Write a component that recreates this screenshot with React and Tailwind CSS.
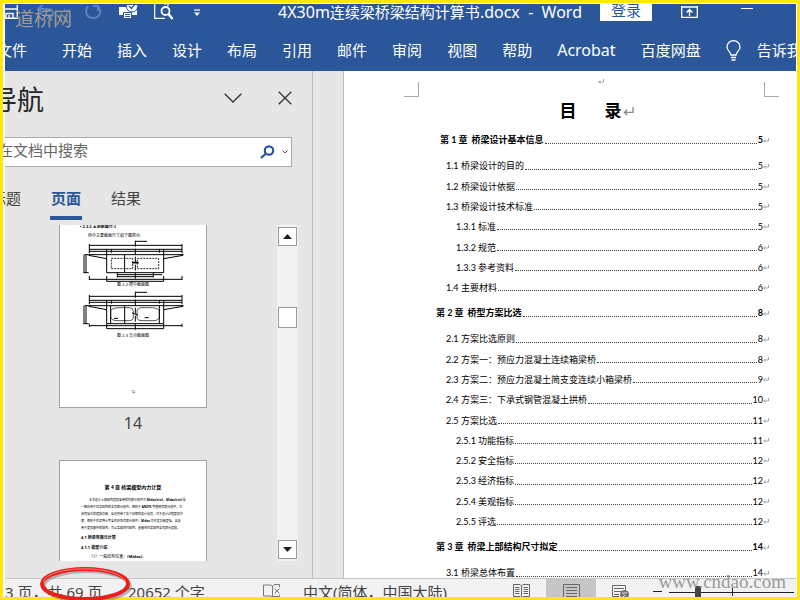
import React from "react";

const tabs = ["开始", "插入", "设计", "布局", "引用", "邮件", "审阅", "视图", "帮助", "Acrobat", "百度网盘"];

const chapters = [
  {
    number: "1",
    title: "桥梁设计基本信息",
    page: 5,
    first: true,
    items: [
      ["1.1", "桥梁设计的目的", 5],
      ["1.2", "桥梁设计依据", 5],
      ["1.3", "桥梁设计技术标准", 5],
      ["1.3.1", "标准", 5],
      ["1.3.2", "规范", 6],
      ["1.3.3", "参考资料", 6],
      ["1.4", "主要材料", 6],
    ],
  },
  {
    number: "2",
    title: "桥型方案比选",
    page: 8,
    items: [
      ["2.1", "方案比选原则", 8],
      ["2.2", "方案一：预应力混凝土连续箱梁桥", 8],
      ["2.3", "方案二：预应力混凝土简支变连续小箱梁桥", 9],
      ["2.4", "方案三：下承式钢管混凝土拱桥", 10],
      ["2.5", "方案比选", 11],
      ["2.5.1", "功能指标", 11],
      ["2.5.2", "安全指标", 12],
      ["2.5.3", "经济指标", 12],
      ["2.5.4", "美观指标", 12],
      ["2.5.5", "评选", 12],
    ],
  },
  {
    number: "3",
    title: "桥梁上部结构尺寸拟定",
    page: 14,
    items: [["3.1", "桥梁总体布置", 14]],
  },
];

function Return({ className }) {
  return (
    <svg viewBox="0 0 12 10" className={className} fill="none" stroke="#8a8a8a" strokeWidth="1.5">
      <path d="M11 0V6H1.5M4.5 3L1.5 6L4.5 9" />
    </svg>
  );
}

function QuickTools() {
  return (
    <div className="flex h-full items-start">
      <button aria-label="保存" className="h-4 w-8">
        <svg width="14" height="14" viewBox="0 0 14 14" fill="none" stroke="#fff" strokeWidth="1.4">
          <path d="M12.3 0V13.3H0M0 4H12" />
          <path d="M1 13V8.5H8V13M4 10v3" />
        </svg>
      </button>
      <button aria-label="撤消" className="h-4 w-12">
        <svg width="34" height="14" viewBox="0 0 34 14" fill="none" stroke="#5b80ba" strokeWidth="2">
          <path d="M6 0L1 4L6 8M1 4H11C18 4 18 13 10 13" />
          <path d="M27 4L30 7L33 4" strokeWidth="1.3" />
        </svg>
      </button>
      <button aria-label="恢复" className="h-4 w-[33px]">
        <svg width="17" height="14" viewBox="0 0 17 14" fill="none" stroke="#5b80ba" strokeWidth="2">
          <path d="M3 1C-1 7 2 13 8 13S18 7 13 1M8 1h5v5" />
        </svg>
      </button>
      <button aria-label="打印预览和打印" className="h-4 w-9">
        <svg width="21" height="14" viewBox="0 0 21 14">
          <path d="M1 2H9V5H13L19 4V10H1Z" fill="#fff" />
          <circle cx="14" cy="1.5" r="5.5" fill="#fff" stroke="#2b579a" />
          <path d="M11 1L13.5 3.5L17 -1" stroke="#2b579a" strokeWidth="1.4" fill="none" />
          <path d="M5.5 7.5H13.5V13.5H5.5Z" fill="#fff" stroke="#2b579a" />
          <path d="M7 9.5h5M7 11.5h5" stroke="#2b579a" />
        </svg>
      </button>
      <button aria-label="查找" className="h-4 w-10">
        <svg width="20" height="16" viewBox="0 0 20 16" fill="none" stroke="#fff" strokeWidth="1.2">
          <path d="M.7 0V14.4H11M11 0V1M14 0V2" />
          <circle cx="11.5" cy="7" r="4" strokeWidth="1.8" />
          <path d="M14.5 10L18.5 15" strokeWidth="2.2" />
        </svg>
      </button>
      <button aria-label="自定义快速访问工具栏" className="h-4 w-3">
        <svg width="6" height="12" viewBox="0 0 6 12" className="mt-1">
          <path d="M0 2h6" stroke="#fff" strokeWidth="1.2" />
          <path d="M0 4.500h6L3 8Z" fill="#fff" />
        </svg>
      </button>
    </div>
  );
}

function Ribbon() {
  return (
    <header className="shrink-0 bg-[#2b579a] text-[15px] text-white">
      <div className="flex h-[17px] justify-between overflow-hidden pr-[43px]">
        <QuickTools />
        <div className="flex">
          <h1 className="mr-[18px] text-base leading-4 whitespace-pre">
            4X30m<span className="text-[15px]">连续梁桥梁结构计算书</span>.docx  -  Word
          </h1>
          <button className="flex w-[52px] justify-center bg-white leading-3 text-[#2b579a]">登录</button>
          <button aria-label="功能区显示选项" className="ml-[29px] h-4">
            <svg width="17" height="12" viewBox="0 0 17 12" fill="none" stroke="#fff" strokeWidth="1.3">
              <path d="M.7 0V11.3H16.3V0M0 1H17M8.5 10V3.5M5.5 6.5L8.5 3.5L11.5 6.5" />
            </svg>
          </button>
          <button aria-label="最小化" className="ml-[43px] flex h-4 w-3 items-start pt-1">
            <span className="h-px w-3 bg-white" />
          </button>
        </div>
      </div>
      <nav className="flex h-[50px] items-center gap-[25px] overflow-hidden pt-2 whitespace-nowrap">
        <button className="mr-[10px] -ml-2 shrink-0">文件</button>
        {tabs.map((t) => (
          <button key={t} className={`shrink-0 ${t === "Acrobat" ? "text-base" : ""}`}>{t}</button>
        ))}
        <button className="flex shrink-0 items-center gap-4">
          <svg width="15" height="21" viewBox="0 0 15 21" fill="none" stroke="#fff" strokeWidth="1.3">
            <path d="M5 15C5 12 1 11 1 7A6.5 6.3 0 0 1 14 7C14 11 10 12 10 15ZM5 17.5h5M5.5 20h4" />
          </svg>
          告诉我
        </button>
      </nav>
    </header>
  );
}

function SectionDrawing({ curved }) {
  return (
    <svg width="106" height="42" viewBox="0 0 318 126" fill="none" stroke="#000" strokeWidth="3" className="ml-[22px] shrink-0">
      <path d="M160 2V122" strokeDasharray="18 6" />
      <path d="M160 4H195M22 16H300M22 28H300M22 34H300" />
      <path d="M22 12V40M300 12V40M74 28V44M245 28V44M88 28V38M232 28V38" />
      <path d="M8 44H305M20 46L74 56M245 56L303 46M74 44V98M245 44V98" />
      <path d="M12 44V98M6 44V98M4 98H20M128 44V98" />
      {curved ? (
        <>
          <path d="M86 58Q94 49 120 50H142Q154 50 154 62V78Q154 89 140 89H104Q86 88 86 76ZM232 58Q224 49 200 50H180Q165 50 165 62V78Q165 89 180 89H216Q232 88 232 76Z" strokeWidth="2" />
          <path d="M86 44V98M232 44V98M74 98H245M22 104H300M74 113H245M22 98V108M300 98V108M74 98V113M245 98V113" />
          <path d="M96 82H108M188 80H200M150 66L168 72" />
        </>
      ) : (
        <>
          <path d="M88 55H152V86H88ZM166 55H230V86H166Z" strokeWidth="2.5" strokeDasharray="6 3" />
          <path d="M74 98H245M106 104H240M106 110H214M106 96V112M214 96V112M22 118H300M74 124H245M22 108V120M300 108V120M74 108V124M245 108V124" />
          <path d="M150 68H170" strokeWidth="5" />
        </>
      )}
    </svg>
  );
}

function Navigation() {
  return (
    <aside className="flex w-[308px] shrink-0 flex-col border-r border-[#bcbcbc] bg-[#e6e6e6] text-[15px] text-[#444]">
      <div className="flex h-[66px] items-center justify-between pr-5 pb-3">
        <h2 className="-ml-[15px] pt-1 text-[27px] text-[#262626]">导航</h2>
        <div className="flex items-center gap-9">
          <button aria-label="任务窗格选项">
            <svg width="18" height="10" viewBox="0 0 18 10" fill="none" stroke="#333" strokeWidth="1.3">
              <path d="M.7 .7L9 9L17.300 .7" />
            </svg>
          </button>
          <button aria-label="关闭">
            <svg width="14" height="14" viewBox="0 0 14 14" fill="none" stroke="#333" strokeWidth="1.3">
              <path d="M.7 .7L13.300 13.300M13.300 .7L.7 13.300" />
            </svg>
          </button>
        </div>
      </div>
      <div className="mr-5 flex h-[30px] shrink-0 items-center border border-l-0 border-[#ababab] bg-white pr-[3px]">
        <input
          aria-label="在文档中搜索"
          placeholder="在文档中搜索"
          className="-ml-[7px] min-w-0 flex-1 pb-[3px] outline-none placeholder:text-[#666]"
        />
        <button aria-label="搜索">
          <svg width="15" height="14" viewBox="0 0 15 14" fill="none" stroke="#2b579a" strokeWidth="2.2">
            <circle cx="9" cy="5.500" r="4.200" />
            <path d="M6 8.500L1 13" />
          </svg>
        </button>
        <button aria-label="搜索选项" className="ml-[7px]">
          <svg width="6" height="4" viewBox="0 0 6 4" fill="none" stroke="#555">
            <path d="M.5 .5L3 3L5.500 .5" />
          </svg>
        </button>
      </div>
      <div className="flex h-[53px] shrink-0 items-end gap-7 leading-[22px]">
        <button className="-ml-[15px] border-b-4 border-transparent px-px pb-[7px]">标题</button>
        <button className="border-b-4 border-[#2b579a] px-px pb-[7px] font-bold text-[#2b579a]">页面</button>
        <button className="border-b-4 border-transparent px-px pb-[7px]">结果</button>
      </div>
      <div className="mt-[5px] mb-[17px] flex min-h-0 flex-1 justify-between pr-[14px] pl-[54px]">
        <div className="flex w-[148px] flex-col overflow-hidden text-[4px] leading-[6px] text-black">
          <div className="flex h-[183px] shrink-0 flex-col border border-t-0 border-[#9da3ab] bg-white">
            <p className="-mt-px ml-5 font-bold">• 2.2.2 主梁截面尺寸</p>
            <p className="mt-[3px] mb-px ml-7">桥中主要截面尺寸如下图所示:</p>
            <SectionDrawing />
            <p className="mb-[3px] text-center">图 2-2 跨中截面图</p>
            <SectionDrawing curved />
            <p className="text-center">图 2-3 支点截面图</p>
            <p className="mt-auto mb-3 text-center text-[3px]">14</p>
          </div>
          <p className="shrink-0 pt-[3px] text-center text-base leading-6 text-[#444]">14</p>
          <div className="mt-[25px] h-[183px] shrink-0 border border-[#9da3ab] bg-white px-[21px] pt-[23px] text-[3px] leading-[7px] whitespace-nowrap">
            <p className="mb-[6px] text-center text-[5px] font-bold">第 4 章 桥梁模型内力计算</p>
            <p className="indent-2">本次设计上部结构建模采用的有限元软件为 <b>Midas/civil</b>。<b>Midas/civil</b> 是</p>
            <p>一款应用于桥梁结构的全有限元软件。相较于 <b>ANSYS</b> 等通用有限元软件，它</p>
            <p>具有强大的建模功能，且还附带了各个国家的设计规范，对于设计过程更加方</p>
            <p>便，相较于桥梁博士等全桥杆系有限元软件，<b>Midas</b> 可开发功能更强，且善</p>
            <p>用于更加复杂的结构，可以实现空间结构，直接将桥梁结构全有限元建模。</p>
            <p className="mt-[2px] text-[4px] font-bold">4.1 桥梁有限元计算</p>
            <p className="mt-[3px] text-[4px] font-bold">4.1.1 模型介绍</p>
            <p className="mt-[2px] indent-2 text-[4px]">（1）一般结构位置：<b>(Midas)</b>。</p>
          </div>
        </div>
        <div className="flex w-[21px] flex-col items-center bg-[#f2f2f2] py-[2px]">
          <button aria-label="向上滚动" className="flex size-[19px] items-center justify-center border border-[#999] bg-white">
            <svg width="9" height="5" viewBox="0 0 9 5"><path d="M0 5L4.500 0L9 5Z" fill="#222" /></svg>
          </button>
          <div className="mt-[61px] h-[21px] w-[19px] border border-[#999] bg-white" />
          <button aria-label="向下滚动" className="mt-auto flex size-[19px] items-center justify-center border border-[#999] bg-white">
            <svg width="9" height="5" viewBox="0 0 9 5"><path d="M0 0L4.500 5L9 0Z" fill="#222" /></svg>
          </button>
        </div>
      </div>
    </aside>
  );
}

function Leader({ page }) {
  return (
    <>
      <span className="mt-[6px] ml-px min-w-0 flex-1 border-b border-dotted border-[#444]" />
      <span className="ml-px">{page}</span>
      <Return className="h-[5px] w-[6px]" />
    </>
  );
}

function Document() {
  return (
    <main className="min-w-0 flex-1 overflow-hidden bg-white font-['Lato','Noto_Sans_CJK_SC',sans-serif] text-[9px] text-black">
      <div className="flex h-[26px] items-end justify-between pt-[10px] pr-[17px] pl-[60px]">
        <span className="size-[15px] border-r border-b border-[#aaa]" />
        <Return className="mb-[13px] ml-[18px] h-[5px] w-[6px]" />
        <span className="size-[15px] border-b border-l border-[#aaa]" />
      </div>
      <h2 className="mt-[2px] flex items-center justify-center pl-[53px] text-[17px] leading-6 font-bold">
        <span className="mr-7">目</span>录<Return className="ml-px h-[9px] w-[11px]" />
      </h2>
      <div className="pt-[2px] pr-[27px] pl-[92px]">
        {chapters.map((c) => (
          <section key={c.number}>
            <h3 className={`mt-[5px] mb-[6px] flex h-5 items-center font-bold ${c.first ? "pl-1" : ""}`}>
              <span className="mr-1">第 {c.number} 章</span>
              {c.title}
              <Leader page={c.page} />
            </h3>
            <ul className={c.items.length === 7 ? "grid h-[142px] auto-rows-fr" : c.items.length === 10 ? "grid h-[203px] auto-rows-fr" : "grid auto-rows-[20px]"}>
              {c.items.map(([n, t, p]) => (
                <li key={n} className={`flex items-center ${n.length > 3 ? "pl-5" : "pl-[10px]"}`}>
                  <span className={n.length > 3 ? "w-[22px]" : "w-[15px]"}>{n}</span>
                  {t}
                  <Leader page={p} />
                </li>
              ))}
            </ul>
          </section>
        ))}
      </div>
    </main>
  );
}

function StatusBar() {
  return (
    <footer className="flex h-[19px] shrink-0 overflow-hidden border-t border-[#c6c6c6] bg-[#f2f2f2] text-[15px] leading-[26px] whitespace-nowrap text-[#444]">
      <span className="w-[123px] shrink-0">3 页，共 69 页</span>
      <span className="w-[135px] shrink-0">20652 个字</span>
      <svg width="18" height="14" viewBox="0 0 18 14" fill="none" stroke="#777" className="mt-[5px] shrink-0">
        <path d="M9.500 2.500L8 1H.5V12H8L9.500 13.500V2L12 .5H16.500V3M16.500 11V12.500H10M11.500 4.500L16.500 9.500M16.500 4.500L11.500 9.500" />
      </svg>
      <span className="ml-[22px]">中文(简体，中国大陆)</span>
      <div className="ml-auto flex">
        <button aria-label="阅读视图" className="flex w-[50px] justify-center pt-[5px]">
          <svg width="17" height="14" viewBox="0 0 17 14" fill="none" stroke="#666">
            <path d="M.5 .5H7L8.500 2L10 .5H16.500V12.500H10L8.500 14L7 12.500H.5ZM8.500 2V14M2 3.500H6.500M2 5.500H6.500M2 7.500H6.500M2 9.500H6.500M10.500 3.500H15M10.500 5.500H15M10.500 7.500H15M10.500 9.500H15" />
          </svg>
        </button>
        <button aria-label="页面视图" className="flex w-[50px] justify-center bg-[#c6c6c6] pt-[5px]">
          <svg width="17" height="14" viewBox="0 0 17 14" fill="none" stroke="#666">
            <path d="M.5 14V.5H16.500V14M3 3.500H14M3 6.500H14M3 9.500H14M3 12.500H14" />
          </svg>
        </button>
        <button aria-label="Web 版式视图" className="flex w-[50px] justify-center pt-[6px]">
          <svg width="18" height="14" viewBox="0 0 18 14" fill="none" stroke="#666">
            <path d="M7 11.500H.5V.5H13.500V5M2 3.500H12M2 6.500H9M2 9.500H7" />
            <circle cx="12.500" cy="9.500" r="4" fill="#777" />
            <path d="M10 8C12 9 13 7 15 8M11 12L13 10" stroke="#eee" />
          </svg>
        </button>
        <button aria-label="缩小" className="ml-[7px] flex w-[9px] items-center pt-[7px]">
          <span className="h-px w-full bg-[#222]" />
        </button>
        <div className="relative ml-[7px] w-[125px]">
          <input
            type="range"
            aria-label="显示比例"
            defaultValue="22"
            className="mt-[13px] block h-px w-full appearance-none bg-[#222] [&::-webkit-slider-thumb]:h-[14px] [&::-webkit-slider-thumb]:w-[6px] [&::-webkit-slider-thumb]:appearance-none [&::-webkit-slider-thumb]:bg-[#444]"
          />
          <span className="absolute top-[9px] left-1/2 h-2 w-px bg-[#222]" />
        </div>
        <span className="w-[2px]" />
      </div>
    </footer>
  );
}

export default function App() {
  return (
    <div className="relative overflow-hidden font-['Noto_Sans','Noto_Sans_CJK_SC',sans-serif]">
      <div className="flex h-screen w-full flex-col overflow-hidden border-[3px] border-[#ffe60c] bg-white pt-px pr-px pl-[2px]">
        <Ribbon />
        <div className="flex min-h-0 flex-1">
          <Navigation />
          <div className="w-[31px] shrink-0 border-r border-[#bcbcbc] bg-[#e6e6e6]" />
          <Document />
        </div>
        <StatusBar />
      </div>
      <span className="absolute top-2 left-[15px] font-['Liberation_Serif','Noto_Sans_CJK_SC',serif] text-[19px] leading-6 text-[#a39d91]">道桥网</span>
      <span className="absolute right-[14px] bottom-[6px] font-['Liberation_Serif',serif] text-[19px] leading-6 text-[#999]">www.cndao.com</span>
      <svg width="98" height="38" viewBox="0 0 98 38" fill="none" className="absolute bottom-[-3px] left-[38px]">
        <ellipse cx="49" cy="21" rx="43" ry="15" stroke="#777" strokeOpacity=".5" strokeWidth="4" />
        <ellipse cx="47" cy="19" rx="43" ry="15" stroke="#e8201c" strokeWidth="4" />
        <path d="M5 17C10 0 80 -1 88 17" stroke="#ff8178" strokeWidth="1" />
      </svg>
    </div>
  );
}
